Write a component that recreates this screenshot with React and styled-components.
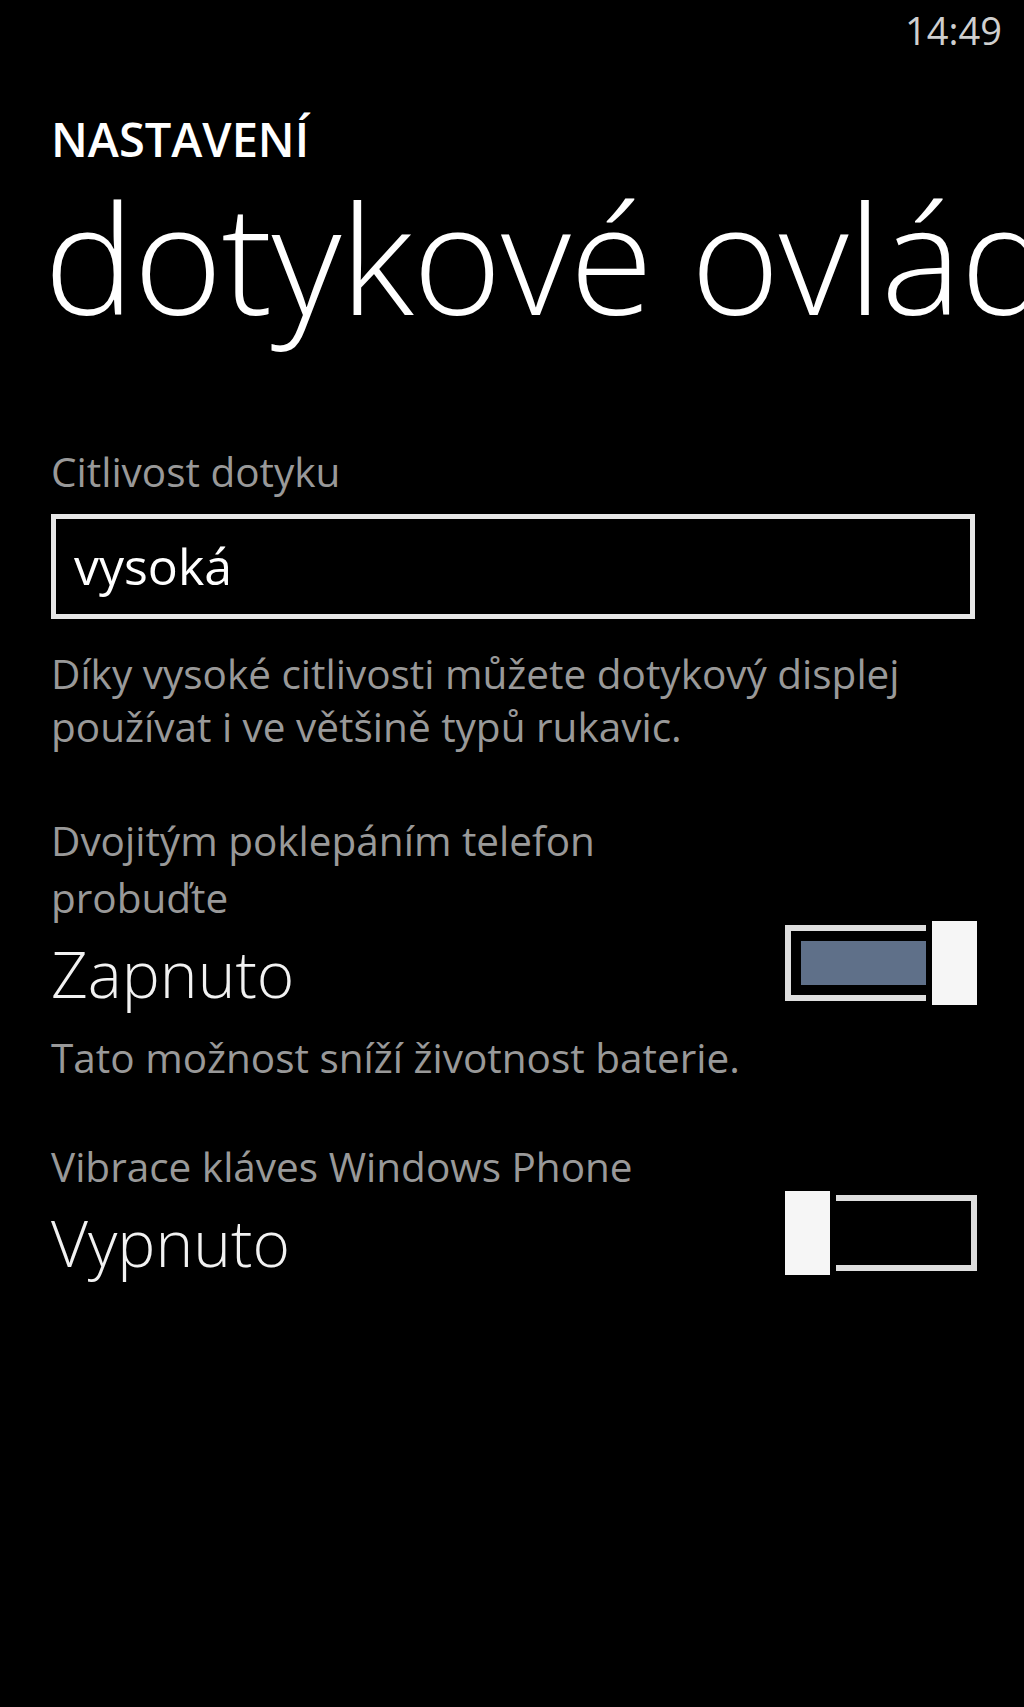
import React from "react";
import styled, { createGlobalStyle } from "styled-components";

const Global = createGlobalStyle`
  html, body { margin: 0; padding: 0; background: #000; }
  body { font-family: "Open Sans", "Noto Sans", "DejaVu Sans", sans-serif; color: #fff; }
  * { box-sizing: border-box; }
`;

const Screen = styled.div`
  width: 1024px;
  min-height: 1707px;
  background: #000;
  overflow: hidden;
`;

const StatusBar = styled.div`
  height: 60px;
  display: flex;
  justify-content: flex-end;
  align-items: center;
  padding-right: 22px;
  font-size: 38px;
  line-height: 60px;
  color: #cfcfcf;
`;

const Content = styled.div`
  padding: 0 49px 0 51px;
`;

const AppTitle = styled.div`
  margin-top: 49px;
  font-size: 47px;
  font-weight: 600;
  line-height: 60px;
  color: #fff;
`;

const PageTitle = styled.div`
  margin: 12px -200px 0 -7px;
  font-size: 152px;
  font-weight: 300;
  line-height: 152px;
  white-space: nowrap;
  letter-spacing: -1px;
  color: #fff;
`;

const Label = styled.div`
  margin-top: ${(p) => p.$mt || 0}px;
  font-size: 40.5px;
  line-height: ${(p) => p.$lh || 54}px;
  color: #999;
  max-width: ${(p) => (p.$narrow ? "660px" : "none")};
`;

const TextBox = styled.div`
  margin-top: 15px;
  height: 105px;
  border: 5px solid #e8e8e8;
  background: #000;
  padding-left: 18px;
  font-size: 50px;
  line-height: 95px;
  color: #fff;
`;

const Row = styled.div`
  display: flex;
  justify-content: space-between;
  align-items: flex-start;
`;

const Value = styled.div`
  margin-top: ${(p) => p.$mt}px;
  font-size: 64px;
  font-weight: 300;
  line-height: 80px;
  color: #f2f2f2;
`;

const Toggle = styled.div`
  display: flex;
  flex-direction: ${(p) => (p.$on ? "row" : "row-reverse")};
  align-items: center;
  gap: 6px;
  width: 192px;
  height: 84px;
  margin-top: ${(p) => p.$mt}px;
  margin-right: -2px;
`;

const Frame = styled.div`
  flex: 1;
  height: 76px;
  border: 6px solid #dedede;
  ${(p) => (p.$on ? "border-right: none;" : "border-left: none;")}
  padding: ${(p) => (p.$on ? "10px 0 10px 10px" : "0")};
  display: flex;
`;

const Fill = styled.div`
  flex: 1;
  background: #5f7089;
`;

const Thumb = styled.div`
  width: 45px;
  height: 84px;
  background: #f6f6f6;
`;

function ToggleSwitch({ on, mt }) {
  return (
    <Toggle $on={on} $mt={mt}>
      <Frame $on={on}>{on && <Fill />}</Frame>
      <Thumb />
    </Toggle>
  );
}

export default function App() {
  return (
    <Screen>
      <Global />
      <StatusBar>14:49</StatusBar>
      <Content>
        <AppTitle>NASTAVENÍ</AppTitle>
        <PageTitle>dotykové ovládání</PageTitle>

        <Label $mt={112}>Citlivost dotyku</Label>
        <TextBox>vysoká</TextBox>
        <Label $mt={28} $lh={53}>
          Díky vysoké citlivosti můžete dotykový displej používat i ve většině typů rukavic.
        </Label>

        <Label $mt={59} $lh={57} $narrow>
          Dvojitým poklepáním telefon probuďte
        </Label>
        <Row>
          <Value $mt={8}>Zapnuto</Value>
          <ToggleSwitch on mt={-5} />
        </Row>
        <Label $mt={17}>Tato možnost sníží životnost baterie.</Label>

        <Label $mt={55}>Vibrace kláves Windows Phone</Label>
        <Row>
          <Value $mt={9}>Vypnuto</Value>
          <ToggleSwitch on={false} mt={-3} />
        </Row>
      </Content>
    </Screen>
  );
}
